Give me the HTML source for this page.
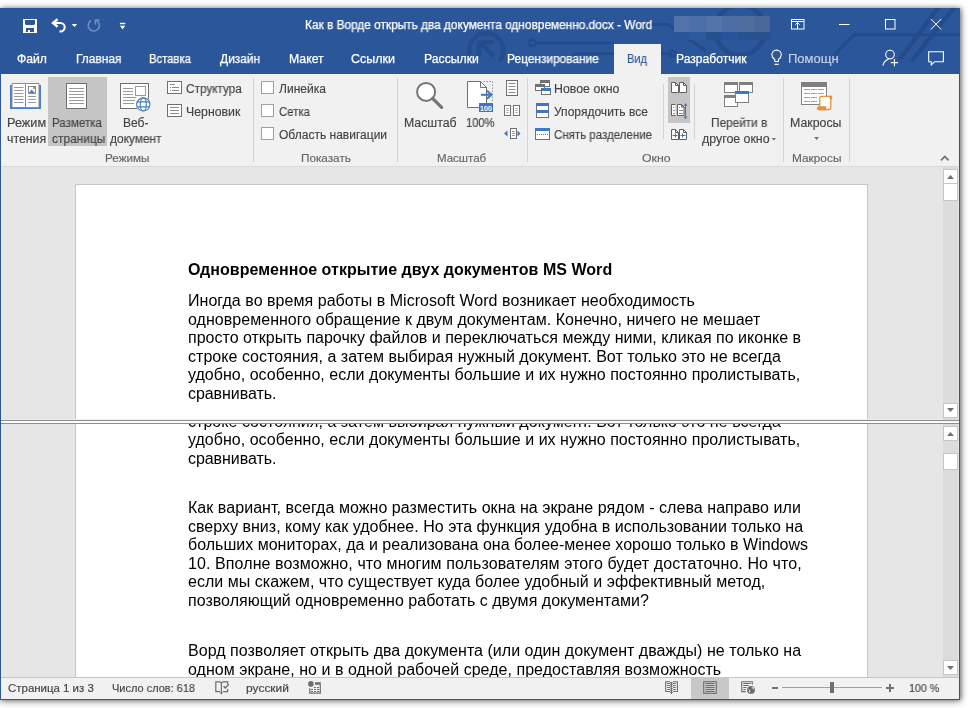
<!DOCTYPE html>
<html><head><meta charset="utf-8">
<style>
html,body{margin:0;padding:0;}
body{width:968px;height:708px;position:relative;overflow:hidden;background:#ffffff;font-family:'Liberation Sans',sans-serif;}
.abs{position:absolute;}
.t{position:absolute;white-space:pre;transform-origin:0 0;will-change:transform;font-family:'Liberation Sans',sans-serif;}
.d{position:absolute;left:188px;white-space:pre;will-change:transform;font:16px/16px 'Liberation Sans',sans-serif;color:#000;}
svg{position:absolute;left:0;top:0;}
</style></head><body>
<!-- window shadow -->
<div class="abs" style="left:0;top:8px;width:960px;height:692px;box-shadow:0 1px 7px 0px rgba(0,0,0,0.5), 2px 0px 4px 0px rgba(0,0,0,0.25);background:#f1f1f1;"></div>
<!-- header -->
<div class="abs" style="left:0;top:8px;width:960px;height:66px;background:#2b579a;"></div>
<svg width="968" height="74" viewBox="0 0 968 74">
 <defs><clipPath id="hc"><rect x="0" y="8" width="960" height="66"/></clipPath></defs>
 <g clip-path="url(#hc)" fill="none" stroke="#244c8a" stroke-width="3.5">
  <path d="M469.9 54.7 A17 17 0 1 1 499.3 61.2" stroke-width="4.4"/>
  <path d="M481 43.5 L493.8 56.3" stroke-width="4.4"/>
  <path d="M476.6 40.2 L493.8 40.2 L493.8 44 L481.6 44 L481.6 56.1 L476.6 56.1 Z" fill="#244c8a" stroke="none"/>
  <circle cx="532.4" cy="42.9" r="3.4" stroke-width="2.4"/>
  <path d="M535.8 42.9 L614 42.9" stroke-width="2.8"/>
  <path d="M571 57.5 L576.5 53.5 L672 53.5" stroke-width="3"/>
  <circle cx="672.3" cy="53.6" r="3.2" stroke-width="2.6"/>
  <path d="M640 24.5 L668 24.5 L706 51" stroke-width="3.2"/>
  <circle cx="740" cy="30" r="25" stroke-width="4.5"/>
  <path d="M960 34.7 L854 34.7 L833.7 55.7"/>
  <path d="M940 5 L899.5 60" stroke-width="4.5"/>
  <path d="M956 5 L911.5 61.5" stroke-width="4.5"/>
 </g>
 <!-- blurred block -->
 <g>
  <rect x="674" y="16" width="16" height="16" fill="#5273a9"/>
  <rect x="690" y="16" width="16" height="16" fill="#4a6fa9"/>
  <rect x="706" y="16" width="16" height="16" fill="#5473a6"/>
  <rect x="722" y="16" width="16" height="16" fill="#4b6ea6"/>
  <rect x="738" y="16" width="16" height="16" fill="#4e6c9c"/>
  <rect x="754" y="16" width="16" height="16" fill="#476898"/>
  <rect x="674" y="32" width="16" height="8" fill="#2a5598"/>
  <rect x="690" y="32" width="16" height="8" fill="#2b5a9e"/>
  <rect x="706" y="32" width="16" height="8" fill="#27508f"/>
  <rect x="722" y="32" width="16" height="8" fill="#28539a"/>
  <rect x="738" y="32" width="16" height="8" fill="#27528f"/>
  <rect x="754" y="32" width="16" height="8" fill="#28528f"/>
 </g>
 <!-- active tab -->
 <rect x="614" y="44" width="47" height="30" fill="#f1f1f1"/>
 <!-- QAT icons -->
 <rect x="23" y="19" width="14" height="14" fill="#fff"/>
 <path d="M25 20 L35 20 L35 24 L34 25 L26 25 L25 24 Z" fill="#2b579a"/>
 <rect x="26" y="28" width="8" height="4" fill="#2b579a"/>
 <rect x="28" y="30" width="2" height="2" fill="#fff"/>
 <g fill="none" stroke="#fff" stroke-width="2">
  <path d="M53 23 L60.5 23 A4.2 4.2 0 0 1 60.5 31.4 L59.5 31.4"/>
  <path d="M57.6 19.2 L53 23 L57.6 26.8" stroke-width="2.4"/>
 </g>
 <path d="M71.7 24 L77.2 24 L74.45 27 Z" fill="#fff"/>
 <g fill="none" stroke="#6f8fc4" stroke-width="1.6">
  <path d="M91.2 20.4 A5.6 5.6 0 1 0 96 20.2"/>
  <path d="M95.4 24.6 L95.4 20 L99.6 20"/>
 </g>
 <rect x="119.9" y="22.8" width="5.4" height="1.4" fill="#fff"/>
 <path d="M119.9 25.8 L125.3 25.8 L122.6 29.2 Z" fill="#fff"/>
 <!-- window controls -->
 <g fill="none" stroke="#fff" stroke-width="1">
  <rect x="791.5" y="19.5" width="12.5" height="9.5"/>
  <path d="M792 21.5 L803.5 21.5"/>
  <path d="M797.5 22.5 L797.5 29 M795.3 24.7 L797.5 22.5 L799.7 24.7"/>
  <path d="M839 24.5 L849.5 24.5"/>
  <rect x="885.5" y="19.5" width="9.5" height="9.5"/>
  <path d="M930.8 19 L941.2 29.4 M941.2 19 L930.8 29.4"/>
 </g>
 <!-- lightbulb -->
 <g fill="none" stroke="#fff" stroke-width="1.1">
  <path d="M774.8 61.5 L774.8 59.5 C772.6 58 771.9 56.3 771.9 54.8 A4.7 4.7 0 0 1 781.3 54.8 C781.3 56.3 780.6 58 778.4 59.5 L778.4 61.5 Z"/>
  <path d="M774.5 64.3 L778.7 64.3" stroke-width="1.2"/>
 </g>
 <!-- person + -->
 <g fill="none" stroke="#fff" stroke-width="1.1">
  <circle cx="890" cy="54.6" r="4.3"/>
  <path d="M883 65.6 A8 8 0 0 1 888.5 59.3"/>
  <path d="M890.8 62.6 L898 62.6 M894.4 59 L894.4 66.2"/>
  <path d="M928.7 51.8 L943.4 51.8 L943.4 61.7 L934.6 61.7 L931.3 65 L931.3 61.7 L928.7 61.7 Z"/>
 </g>
</svg>

<!-- ribbon -->
<div class="abs" style="left:1px;top:74px;width:958px;height:92px;background:#f1f1f1;"></div>
<div class="abs" style="left:1px;top:166px;width:958px;height:1px;background:#d9d9d9;"></div>
<!-- doc area -->
<div class="abs" style="left:1px;top:167px;width:958px;height:510px;background:#e6e6e6;"></div>
<!-- upper pane -->
<div class="abs" style="left:1px;top:167px;width:942px;height:253px;overflow:hidden;">
  <div class="abs" style="left:74px;top:17px;width:791px;height:400px;background:#fff;border:1px solid #c6c6c6;"></div>
  <div class="abs" style="left:-1px;top:0;width:943px;height:253px;">
<div class="d" style="top:95px;letter-spacing:0.0356px;font-weight:bold;">Одновременное открытие двух документов MS Word</div>
<div class="d" style="top:126px;letter-spacing:0.0371px;">Иногда во время работы в Microsoft Word возникает необходимость</div>
<div class="d" style="top:145px;letter-spacing:0.0353px;">одновременного обращение к двум документам. Конечно, ничего не мешает</div>
<div class="d" style="top:163px;letter-spacing:0.0040px;">просто открыть парочку файлов и переключаться между ними, кликая по иконке в</div>
<div class="d" style="top:182px;letter-spacing:0.0351px;">строке состояния, а затем выбирая нужный документ. Вот только это не всегда</div>
<div class="d" style="top:200px;letter-spacing:0.0257px;">удобно, особенно, если документы большие и их нужно постоянно пролистывать,</div>
<div class="d" style="top:219px;letter-spacing:-0.0700px;">сравнивать.</div>
  </div>
</div>
<!-- lower pane -->
<div class="abs" style="left:1px;top:424px;width:942px;height:253px;overflow:hidden;">
  <div class="abs" style="left:74px;top:-10px;width:791px;height:400px;background:#fff;border-left:1px solid #c6c6c6;border-right:1px solid #c6c6c6;"></div>
  <div class="abs" style="left:-1px;top:0;width:943px;height:253px;">
<div class="d" style="top:-10px;letter-spacing:0.0351px;">строке состояния, а затем выбирая нужный документ. Вот только это не всегда</div>
<div class="d" style="top:8px;letter-spacing:0.0257px;">удобно, особенно, если документы большие и их нужно постоянно пролистывать,</div>
<div class="d" style="top:27px;letter-spacing:-0.0700px;">сравнивать.</div>
<div class="d" style="top:76px;letter-spacing:0.0513px;">Как вариант, всегда можно разместить окна на экране рядом - слева направо или</div>
<div class="d" style="top:95px;letter-spacing:0.0169px;">сверху вниз, кому как удобнее. Но эта функция удобна в использовании только на</div>
<div class="d" style="top:113px;letter-spacing:0.0122px;">больших мониторах, да и реализована она более-менее хорошо только в Windows</div>
<div class="d" style="top:132px;letter-spacing:0.0908px;">10. Вполне возможно, что многим пользователям этого будет достаточно. Но что,</div>
<div class="d" style="top:150px;letter-spacing:0.0333px;">если мы скажем, что существует куда более удобный и эффективный метод,</div>
<div class="d" style="top:169px;letter-spacing:0.0170px;">позволяющий одновременно работать с двумя документами?</div>
<div class="d" style="top:219px;letter-spacing:0.0280px;">Ворд позволяет открыть два документа (или один документ дважды) не только на</div>
<div class="d" style="top:238px;letter-spacing:0.0385px;">одном экране, но и в одной рабочей среде, предоставляя возможность</div>
  </div>
</div>
<!-- split bar -->
<div class="abs" style="left:1px;top:419px;width:958px;height:1px;background:#ececec;"></div>
<div class="abs" style="left:1px;top:420px;width:958px;height:1px;background:#888f97;"></div>
<div class="abs" style="left:1px;top:421px;width:958px;height:2px;background:#fbfbfb;"></div>
<div class="abs" style="left:1px;top:423px;width:958px;height:1px;background:#888f97;"></div>
<!-- scrollbars -->
<div class="abs" style="left:943px;top:167px;width:15px;height:253px;background:#dcdcdc;"></div>
<div class="abs" style="left:943px;top:424px;width:15px;height:253px;background:#dcdcdc;"></div>
<div class="abs" style="left:943px;top:169px;width:13px;height:13px;background:#fff;border:1px solid #c6c6c6;"></div>
<div class="abs" style="left:943px;top:183px;width:13px;height:16px;background:#fff;border:1px solid #c6c6c6;"></div>
<div class="abs" style="left:943px;top:403px;width:13px;height:13px;background:#fff;border:1px solid #c6c6c6;"></div>
<div class="abs" style="left:943px;top:426px;width:13px;height:13px;background:#fff;border:1px solid #c6c6c6;"></div>
<div class="abs" style="left:943px;top:453px;width:13px;height:15px;background:#fff;border:1px solid #c6c6c6;"></div>
<div class="abs" style="left:943px;top:660px;width:13px;height:13px;background:#fff;border:1px solid #c6c6c6;"></div>
<svg width="968" height="708" viewBox="0 0 968 708" style="pointer-events:none">
 <g fill="#707070">
  <path d="M947 179 L954 179 L950.5 175 Z"/>
  <path d="M947 408 L954 408 L950.5 412 Z"/>
  <path d="M947 436 L954 436 L950.5 432 Z"/>
  <path d="M947 666 L954 666 L950.5 670 Z"/>
 </g>
</svg>
<!-- status bar -->
<div class="abs" style="left:1px;top:677px;width:958px;height:1px;background:#c6c6c6;"></div>
<div class="abs" style="left:1px;top:678px;width:958px;height:21px;background:#f1f1f1;"></div>
<div class="abs" style="left:691px;top:678px;width:38px;height:21px;background:#c8c8c8;"></div>
<!-- window borders -->
<div class="abs" style="left:0;top:74px;width:1px;height:626px;background:#2b579a;"></div>
<div class="abs" style="left:959px;top:74px;width:1px;height:626px;background:#2b579a;"></div>
<div class="abs" style="left:0;top:699px;width:960px;height:1px;background:#2b579a;"></div>

<!-- ribbon icons -->
<svg width="968" height="708" viewBox="0 0 968 708">
 <!-- selected backgrounds -->
 <rect x="48" y="77" width="59" height="69" fill="#c5c5c5"/>
 <rect x="668" y="77" width="22" height="46" fill="#c5c5c5"/>
 <!-- separators -->
 <g fill="#d4d4d4">
  <rect x="253" y="78" width="1" height="84"/>
  <rect x="397" y="78" width="1" height="84"/>
  <rect x="527" y="78" width="1" height="84"/>
  <rect x="783" y="78" width="1" height="84"/>
  <rect x="849" y="78" width="1" height="84"/>
  <rect x="663" y="84" width="1" height="55"/>
  <rect x="694" y="84" width="1" height="55"/>
 </g>
 <!-- Reading mode book -->
 <path d="M10 85 L10 109 L41 109 L41 85 Z" fill="#4a7fc1"/>
 <path d="M12 83.5 L25.5 83.5 L25.5 107.5 L12 107.5 Z" fill="#fff" stroke="#8a8a8a" stroke-width="1"/>
 <path d="M25.5 83.5 L39 83.5 L39 107.5 L25.5 107.5 Z" fill="#fff" stroke="#8a8a8a" stroke-width="1"/>
 <g stroke="#9a9a9a" stroke-width="1">
  <path d="M14 87.5 L23.5 87.5 M14 90.5 L23.5 90.5 M14 93.5 L23.5 93.5 M14 96.5 L23.5 96.5 M14 99.5 L23.5 99.5 M14 102.5 L23.5 102.5"/>
  <path d="M28 96.5 L36 96.5 M28 99.5 L36 99.5 M28 102.5 L36 102.5"/>
 </g>
 <rect x="28.5" y="86.5" width="7" height="7" fill="#fff" stroke="#8a8a8a"/>
 <path d="M29 93 L31.5 89.5 L35 93 Z" fill="#4a7fc1"/>
 <rect x="33" y="87" width="2" height="2" fill="#e8913a"/>
 <!-- Print layout page -->
 <rect x="66.5" y="83.5" width="20" height="25" fill="#fff" stroke="#707070"/>
 <g stroke="#9a9a9a"><path d="M69 88.5 L84 88.5 M69 91.5 L84 91.5 M69 94.5 L84 94.5 M69 97.5 L84 97.5 M69 100.5 L84 100.5 M69 103.5 L84 103.5"/></g>
 <!-- Web layout -->
 <rect x="120.5" y="83.5" width="28" height="25" fill="#fff" stroke="#707070"/>
 <rect x="135.5" y="86.5" width="10" height="9" fill="#fff" stroke="#9a9a9a"/>
 <g stroke="#9a9a9a"><path d="M123 88.5 L133 88.5 M123 91.5 L133 91.5 M123 94.5 L133 94.5 M123 97.5 L136 97.5 M123 100.5 L135 100.5 M123 103.5 L134 103.5"/></g>
 <circle cx="143.3" cy="104.4" r="7.5" fill="#fff"/>
 <g fill="none" stroke="#4a7fc1" stroke-width="1.2">
  <circle cx="143.3" cy="104.4" r="6.6"/>
  <ellipse cx="143.3" cy="104.4" rx="3" ry="6.6"/>
  <path d="M136.8 101.9 L149.8 101.9 M136.8 106.9 L149.8 106.9"/>
 </g>
 <!-- Structure / Draft -->
 <rect x="167.5" y="81.5" width="14" height="12" fill="#fff" stroke="#707070"/>
 <g stroke="#8a8a8a"><path d="M170 84.5 L175 84.5 M172 87.5 L179 87.5 M172 90.5 L179 90.5"/></g>
 <g fill="#8a8a8a"><rect x="170" y="87" width="1" height="1"/><rect x="170" y="90" width="1" height="1"/></g>
 <rect x="167.5" y="104.5" width="14" height="12" fill="#fff" stroke="#707070"/>
 <g stroke="#8a8a8a"><path d="M170 107.5 L179 107.5 M170 110.5 L179 110.5 M170 113.5 L179 113.5"/></g>
 <!-- checkboxes -->
 <g fill="#fff" stroke="#a0a0a0">
  <rect x="261.5" y="81.5" width="12" height="12"/>
  <rect x="261.5" y="104.5" width="12" height="12"/>
  <rect x="261.5" y="127.5" width="12" height="12"/>
 </g>
 <!-- zoom magnifier -->
 <circle cx="426.1" cy="91.9" r="9" fill="#fff" stroke="#767676" stroke-width="2"/>
 <path d="M432.6 98.4 L441.6 107.4" stroke="#767676" stroke-width="3.2" stroke-linecap="round"/>
 <!-- 100% -->
 <path d="M467.5 81.5 L480.5 81.5 L486.5 87.5 L486.5 107.5 L467.5 107.5 Z" fill="#fff" stroke="#707070"/>
 <path d="M480.5 81.5 L480.5 87.5 L486.5 87.5" fill="none" stroke="#707070"/>
 <path d="M483.5 81.5 L492.5 81.5 L492.5 101" fill="none" stroke="#909090" stroke-dasharray="1.5 1.5"/>
 <path d="M481 94.8 L490 94.8" stroke="#3d78c0" stroke-width="2"/>
 <path d="M487 90.8 L491.5 94.8 L487 98.8" fill="none" stroke="#3d78c0" stroke-width="2"/>
 <rect x="479" y="103" width="14" height="9" fill="#3d78c0"/>
 <text x="480" y="110.6" font-family="Liberation Sans" font-size="7.5" font-weight="bold" fill="#fff" textLength="12" lengthAdjust="spacingAndGlyphs">100</text>
 <!-- one page -->
 <rect x="506.5" y="80.5" width="11" height="15" fill="#fff" stroke="#707070"/>
 <g stroke="#8a8a8a"><path d="M508.5 83.5 L515.5 83.5 M508.5 86.5 L515.5 86.5 M508.5 89.5 L515.5 89.5 M508.5 92.5 L515.5 92.5"/></g>
 <!-- multiple pages -->
 <rect x="504.5" y="105.5" width="6" height="10" fill="#fff" stroke="#707070"/>
 <rect x="513.5" y="105.5" width="6" height="10" fill="#fff" stroke="#707070"/>
 <g stroke="#9a9a9a"><path d="M506.5 108.5 L508.5 108.5 M506.5 110.5 L508.5 110.5 M506.5 112.5 L508.5 112.5 M515.5 108.5 L517.5 108.5 M515.5 110.5 L517.5 110.5 M515.5 112.5 L517.5 112.5"/></g>
 <!-- page width -->
 <rect x="510.5" y="128.5" width="6" height="10" fill="#fff" stroke="#707070"/>
 <g stroke="#9a9a9a"><path d="M512 131.5 L515 131.5 M512 133.5 L515 133.5 M512 135.5 L515 135.5"/></g>
 <path d="M504 133.5 L507.5 130.5 L507.5 136.5 Z M520.5 133.5 L517.5 130.5 L517.5 136.5 Z" fill="#3d78c0"/>
 <!-- new window -->
 <rect x="540.5" y="80.5" width="9" height="6" fill="#fff" stroke="#707070"/>
 <rect x="540" y="80" width="10" height="3" fill="#707070"/>
 <rect x="535.5" y="84.5" width="9" height="6" fill="#fff" stroke="#707070"/>
 <rect x="535" y="84" width="10" height="3" fill="#707070"/>
 <rect x="541.5" y="88.5" width="9" height="6" fill="#fff" stroke="#707070"/>
 <rect x="541" y="88" width="10" height="3" fill="#3d78c0"/>
 <!-- arrange all -->
 <rect x="536.5" y="103.5" width="12" height="14" fill="#fff" stroke="#707070"/>
 <rect x="536" y="103" width="13" height="3" fill="#3d78c0"/>
 <rect x="536" y="110" width="13" height="3" fill="#3d78c0"/>
 <!-- remove split -->
 <rect x="535.5" y="128.5" width="14" height="11" fill="#fff" stroke="#707070"/>
 <rect x="535" y="128" width="15" height="3" fill="#3d78c0"/>
 <path d="M537 134.5 L548 134.5" stroke="#3d78c0" stroke-dasharray="1 1"/>
 <!-- view side by side -->
 <path d="M671.5 82.5 L675.5 82.5 L678.5 85.5 L678.5 92.5 L671.5 92.5 Z" fill="#fff" stroke="#606060"/><path d="M675.5 82.5 L675.5 85.5 L678.5 85.5" fill="none" stroke="#606060"/><path d="M679.5 82.5 L683.5 82.5 L686.5 85.5 L686.5 92.5 L679.5 92.5 Z" fill="#fff" stroke="#606060"/><path d="M683.5 82.5 L683.5 85.5 L686.5 85.5" fill="none" stroke="#606060"/>
 <!-- sync scroll -->
 <path d="M675.5 104.5 L671.5 104.5 L671.5 115.5 L675.5 115.5" fill="#fff" stroke="#606060"/><path d="M677.5 104.5 L681.5 104.5 L684.0 107.0 L684.0 115.5 L677.5 115.5 Z" fill="#fff" stroke="#606060"/><path d="M681.5 104.5 L681.5 107.0 L684.0 107.0" fill="none" stroke="#606060"/>
 <g stroke="#909090"><path d="M673 107.5 L674 107.5 M673 110.5 L675 110.5 M673 113.5 L675 113.5 M679 107.5 L680 107.5 M679 110.5 L683 110.5 M679 113.5 L683 113.5"/></g>
 <path d="M685.5 104 L685.5 118" stroke="#3d78c0"/>
 <path d="M683.6 105.8 L685.5 103 L687.4 105.8 Z M683.6 116.4 L685.5 119.2 L687.4 116.4 Z" fill="#3d78c0"/>
 <!-- reset window position -->
 <path d="M671.5 129.5 L675.5 129.5 L678.5 132.5 L678.5 139.5 L671.5 139.5 Z" fill="#fff" stroke="#606060"/><path d="M675.5 129.5 L675.5 132.5 L678.5 132.5" fill="none" stroke="#606060"/><path d="M679.5 129.5 L683.5 129.5 L686.5 132.5 L686.5 139.5 L679.5 139.5 Z" fill="#fff" stroke="#606060"/><path d="M683.5 129.5 L683.5 132.5 L686.5 132.5" fill="none" stroke="#606060"/>
 <path d="M672.5 135.5 L677.5 135.5 M675.5 133.5 L675.5 137.5 M680.5 135.5 L685.5 135.5 M682.5 133.5 L682.5 137.5" stroke="#3d78c0"/>
 <!-- switch windows -->
 <rect x="724.5" y="82.5" width="13" height="10" fill="#fff" stroke="#808080"/>
 <rect x="724" y="82" width="14" height="3" fill="#808080"/>
 <rect x="739.5" y="82.5" width="13" height="10" fill="#fff" stroke="#808080"/>
 <rect x="739" y="82" width="14" height="3" fill="#808080"/>
 <rect x="724.5" y="95.5" width="13" height="11" fill="#fff" stroke="#808080"/>
 <rect x="724" y="95" width="14" height="3" fill="#808080"/>
 <rect x="735.5" y="91.5" width="13" height="11" fill="#fff" stroke="#808080"/>
 <rect x="735" y="91" width="14" height="3" fill="#3d78c0"/>
 <path d="M771.6 138 L776 138 L773.8 140.4 Z" fill="#707070"/>
 <!-- macros -->
 <rect x="801.5" y="82.5" width="25" height="22" fill="#fff" stroke="#808080"/>
 <rect x="801" y="82" width="26" height="5" fill="#808080"/>
 <g stroke="#a0a0a0"><path d="M804 89.5 L810 89.5 M811 89.5 L817 89.5 M818 89.5 L824 89.5 M804 93.5 L810 93.5 M811 93.5 L817 93.5 M818 93.5 L824 93.5 M804 97.5 L810 97.5 M811 97.5 L817 97.5 M804 101.5 L810 101.5 M811 101.5 L817 101.5"/></g>
 <path d="M817.5 95 L833 95 L833 111 L816 111 Z" fill="#f1f1f1" opacity="0"/>
 <path d="M819.8 109.5 L819.8 98 Q819.8 96.3 821.5 96.3 L830.8 96.3 L830.8 108 Q830.8 109.5 829.3 109.5 Z" fill="#fff" stroke="#e8913a" stroke-width="1.3"/>
 <rect x="829.6" y="95.8" width="2.6" height="3.6" rx="0.8" fill="#e8913a"/>
 <path d="M818.7 106.2 L826.2 106.2 L826.2 110.2 L818.7 110.2 Q816.9 110.2 816.9 108.2 Q816.9 106.2 818.7 106.2 Z" fill="#e8913a"/>
 <path d="M814.2 137 L819 137 L816.6 140 Z" fill="#707070"/>
 <!-- collapse caret -->
 <path d="M941 160.3 L944.8 156.5 L948.6 160.3" fill="none" stroke="#707070" stroke-width="1.7"/>
 <!-- status bar icons -->
 <g fill="none" stroke="#6e6e6e" stroke-width="1.2">
  <path d="M220 681.8 L215.8 681.8 L215.8 691.6 L220 691.6"/>
  <path d="M223 681.8 L227.6 681.8 L227.6 684"/>
  <path d="M227.6 689 L227.6 691.6 L223 691.6"/>
  <path d="M220 681.6 L221.4 683 L223 681.6"/>
  <path d="M221.4 683 L221.4 694"/>
  <path d="M223.6 686.3 L225.2 688 L228.8 684.3" stroke-width="1.4"/>
  <path d="M309.8 688.2 L309.8 693.2 L320.3 693.2 L320.3 684.5"/>
 </g>
 <path d="M219.8 692.6 L221.4 694.6 L223 692.6 Z" fill="#6e6e6e"/>
 <circle cx="310.9" cy="683.9" r="2.8" fill="#6e6e6e"/>
 <rect x="315" y="682.2" width="5.8" height="2.6" fill="#6e6e6e"/>
 <g fill="#6e6e6e">
  <rect x="314" y="687" width="2" height="1"/><rect x="317" y="687" width="2" height="1"/>
  <rect x="311" y="689" width="2" height="1"/><rect x="314" y="689" width="2" height="1"/><rect x="317" y="689" width="2" height="1"/>
  <rect x="311" y="691" width="2" height="1"/><rect x="314" y="691" width="2" height="1"/><rect x="317" y="691" width="2" height="1"/>
 </g>
 <!-- read mode -->
 <g fill="none" stroke="#6e6e6e" stroke-width="1.1">
  <path d="M670 681.8 L665.7 681.8 L665.7 691.5 L670 691.5"/>
  <path d="M673 681.8 L677.4 681.8 L677.4 691.5 L673 691.5"/>
  <path d="M667.2 683.5 L670 683.5 M667.2 685.5 L670 685.5 M667.2 687.5 L670 687.5 M667.2 689.5 L670 689.5"/>
  <path d="M673 683.5 L675.8 683.5 M673 685.5 L675.8 685.5 M673 687.5 L675.8 687.5 M673 689.5 L675.8 689.5"/>
  <path d="M671.4 682.5 L671.4 694"/>
  <path d="M670.2 682.6 L672.6 682.6 M670.2 684.5 L672.6 684.5 M670.2 686.5 L672.6 686.5 M670.2 688.5 L672.6 688.5 M670.2 690.5 L672.6 690.5 M670.2 692.5 L672.6 692.5"/>
 </g>
 <!-- print layout -->
 <g fill="none" stroke="#6e6e6e" stroke-width="1.1">
  <rect x="703.7" y="681.7" width="12.6" height="11.6"/>
  <path d="M705.5 683.5 L714.5 683.5 M705.5 685.5 L714.5 685.5 M705.5 687.5 L714.5 687.5 M705.5 689.5 L714.5 689.5 M705.5 691.5 L714.5 691.5"/>
 </g>
 <!-- web layout -->
 <g fill="none" stroke="#6e6e6e" stroke-width="1.1">
  <path d="M745.8 691.6 L741.7 691.6 L741.7 681.7 L752.3 681.7 L752.3 684.5"/>
  <path d="M743.2 683.5 L750.8 683.5 M743.2 685.5 L748.7 685.5 M743.2 687.5 L746.6 687.5 M743.2 689.5 L745.8 689.5"/>
 </g>
 <circle cx="751" cy="689.9" r="3.9" fill="#6e6e6e"/>
 <path d="M748.5 688.5 L750.5 691.5 L749.5 693 Z M751.5 687.5 L753.5 687 L753.8 689.5 Z" fill="#f1f1f1"/>
 <rect x="772" y="687" width="6" height="2" fill="#707070"/>
 <rect x="782" y="687" width="100" height="1" fill="#a0a0a0"/>
 <rect x="830" y="682" width="4" height="11" fill="#707070"/>
 <rect x="886" y="687" width="8" height="2" fill="#707070"/>
 <rect x="889" y="684" width="2" height="8" fill="#707070"/>
</svg>
<span class="t" style="left:305.21px;top:19px;font-size:12px;line-height:12px;color:#ffffff;transform:scaleX(0.9874);-webkit-text-stroke:0.25px #ffffff;">Как в Ворде открыть два документа одновременно.docx - Word</span>
<span class="t" style="left:16.69px;top:53px;font-size:12px;line-height:12px;color:#ffffff;transform:scaleX(1.0143);-webkit-text-stroke:0.25px #ffffff;">Файл</span>
<span class="t" style="left:75.51px;top:53px;font-size:12px;line-height:12px;color:#ffffff;transform:scaleX(0.9932);-webkit-text-stroke:0.25px #ffffff;">Главная</span>
<span class="t" style="left:148.96px;top:53px;font-size:12px;line-height:12px;color:#ffffff;transform:scaleX(0.9386);-webkit-text-stroke:0.25px #ffffff;">Вставка</span>
<span class="t" style="left:220.30px;top:53px;font-size:12px;line-height:12px;color:#ffffff;transform:scaleX(0.9925);-webkit-text-stroke:0.25px #ffffff;">Дизайн</span>
<span class="t" style="left:288.78px;top:53px;font-size:12px;line-height:12px;color:#ffffff;transform:scaleX(1.0212);-webkit-text-stroke:0.25px #ffffff;">Макет</span>
<span class="t" style="left:351.46px;top:53px;font-size:12px;line-height:12px;color:#ffffff;transform:scaleX(1.0415);-webkit-text-stroke:0.25px #ffffff;">Ссылки</span>
<span class="t" style="left:423.98px;top:53px;font-size:12px;line-height:12px;color:#ffffff;transform:scaleX(1.0173);-webkit-text-stroke:0.25px #ffffff;">Рассылки</span>
<span class="t" style="left:507.21px;top:53px;font-size:12px;line-height:12px;color:#ffffff;transform:scaleX(0.9912);-webkit-text-stroke:0.25px #ffffff;">Рецензирование</span>
<span class="t" style="left:627.48px;top:53px;font-size:12px;line-height:12px;color:#2b579a;transform:scaleX(0.9190);-webkit-text-stroke:0.15px #2b579a;">Вид</span>
<span class="t" style="left:675.69px;top:53px;font-size:12px;line-height:12px;color:#ffffff;transform:scaleX(1.0087);-webkit-text-stroke:0.25px #ffffff;">Разработчик</span>
<span class="t" style="left:787.92px;top:53px;font-size:12px;line-height:12px;color:#c6d2e6;transform:scaleX(1.0844);-webkit-text-stroke:0.15px #c6d2e6;">Помощн</span>
<span class="t" style="left:6.94px;top:117px;font-size:12px;line-height:12px;color:#444444;transform:scaleX(1.0571);-webkit-text-stroke:0.15px #444444;">Режим</span>
<span class="t" style="left:6.97px;top:133px;font-size:12px;line-height:12px;color:#444444;transform:scaleX(1.0278);-webkit-text-stroke:0.15px #444444;">чтения</span>
<span class="t" style="left:52.34px;top:117px;font-size:12px;line-height:12px;color:#444444;transform:scaleX(0.9608);-webkit-text-stroke:0.15px #444444;">Разметка</span>
<span class="t" style="left:51.50px;top:133px;font-size:12px;line-height:12px;color:#444444;transform:scaleX(0.9925);-webkit-text-stroke:0.15px #444444;">страницы</span>
<span class="t" style="left:123.00px;top:117px;font-size:12px;line-height:12px;color:#444444;transform:scaleX(1.0042);-webkit-text-stroke:0.15px #444444;">Веб-</span>
<span class="t" style="left:109.70px;top:133px;font-size:12px;line-height:12px;color:#444444;transform:scaleX(0.9904);-webkit-text-stroke:0.15px #444444;">документ</span>
<span class="t" style="left:186.22px;top:83px;font-size:12px;line-height:12px;color:#444444;transform:scaleX(0.9804);-webkit-text-stroke:0.15px #444444;">Структура</span>
<span class="t" style="left:186.17px;top:106px;font-size:12px;line-height:12px;color:#444444;transform:scaleX(1.0250);-webkit-text-stroke:0.15px #444444;">Черновик</span>
<span class="t" style="left:105.34px;top:153px;font-size:11px;line-height:11px;color:#666666;transform:scaleX(1.0650);-webkit-text-stroke:0.15px #666666;">Режимы</span>
<span class="t" style="left:278.90px;top:83px;font-size:12px;line-height:12px;color:#444444;transform:scaleX(1.0043);-webkit-text-stroke:0.15px #444444;">Линейка</span>
<span class="t" style="left:278.65px;top:106px;font-size:12px;line-height:12px;color:#444444;transform:scaleX(0.9469);-webkit-text-stroke:0.15px #444444;">Сетка</span>
<span class="t" style="left:278.90px;top:129px;font-size:12px;line-height:12px;color:#444444;transform:scaleX(1.0019);-webkit-text-stroke:0.15px #444444;">Область навигации</span>
<span class="t" style="left:301.03px;top:153px;font-size:11px;line-height:11px;color:#666666;transform:scaleX(1.0667);-webkit-text-stroke:0.15px #666666;">Показать</span>
<span class="t" style="left:403.98px;top:117px;font-size:12px;line-height:12px;color:#444444;transform:scaleX(1.0240);-webkit-text-stroke:0.15px #444444;">Масштаб</span>
<span class="t" style="left:466.27px;top:117px;font-size:12px;line-height:12px;color:#444444;transform:scaleX(0.9276);-webkit-text-stroke:0.15px #444444;">100%</span>
<span class="t" style="left:437.35px;top:153px;font-size:11px;line-height:11px;color:#666666;transform:scaleX(1.0457);-webkit-text-stroke:0.15px #666666;">Масштаб</span>
<span class="t" style="left:554.17px;top:83px;font-size:12px;line-height:12px;color:#444444;transform:scaleX(1.0306);-webkit-text-stroke:0.15px #444444;">Новое окно</span>
<span class="t" style="left:554.20px;top:106px;font-size:12px;line-height:12px;color:#444444;transform:scaleX(1.0033);-webkit-text-stroke:0.15px #444444;">Упорядочить все</span>
<span class="t" style="left:554.24px;top:129px;font-size:12px;line-height:12px;color:#444444;transform:scaleX(0.9594);-webkit-text-stroke:0.15px #444444;">Снять разделение</span>
<span class="t" style="left:641.80px;top:153px;font-size:11px;line-height:11px;color:#666666;transform:scaleX(1.1200);-webkit-text-stroke:0.15px #666666;">Окно</span>
<span class="t" style="left:711.22px;top:117px;font-size:12px;line-height:12px;color:#444444;transform:scaleX(0.9839);-webkit-text-stroke:0.15px #444444;">Перейти в</span>
<span class="t" style="left:701.50px;top:133px;font-size:12px;line-height:12px;color:#444444;transform:scaleX(1.0308);-webkit-text-stroke:0.15px #444444;">другое окно</span>
<span class="t" style="left:790.07px;top:117px;font-size:12px;line-height:12px;color:#444444;transform:scaleX(1.0286);-webkit-text-stroke:0.15px #444444;">Макросы</span>
<span class="t" style="left:792.32px;top:153px;font-size:11px;line-height:11px;color:#666666;transform:scaleX(1.0773);-webkit-text-stroke:0.15px #666666;">Макросы</span>
<span class="t" style="left:7.86px;top:683px;font-size:11px;line-height:11px;color:#444444;transform:scaleX(1.0407);-webkit-text-stroke:0.15px #444444;">Страница 1 из 3</span>
<span class="t" style="left:112.40px;top:683px;font-size:11px;line-height:11px;color:#444444;transform:scaleX(0.9976);-webkit-text-stroke:0.15px #444444;">Число слов: 618</span>
<span class="t" style="left:245.71px;top:683px;font-size:11px;line-height:11px;color:#444444;transform:scaleX(1.0895);-webkit-text-stroke:0.15px #444444;">русский</span>
<span class="t" style="left:909.23px;top:683px;font-size:11px;line-height:11px;color:#444444;transform:scaleX(0.9700);-webkit-text-stroke:0.15px #444444;">100 %</span>
</body></html>
